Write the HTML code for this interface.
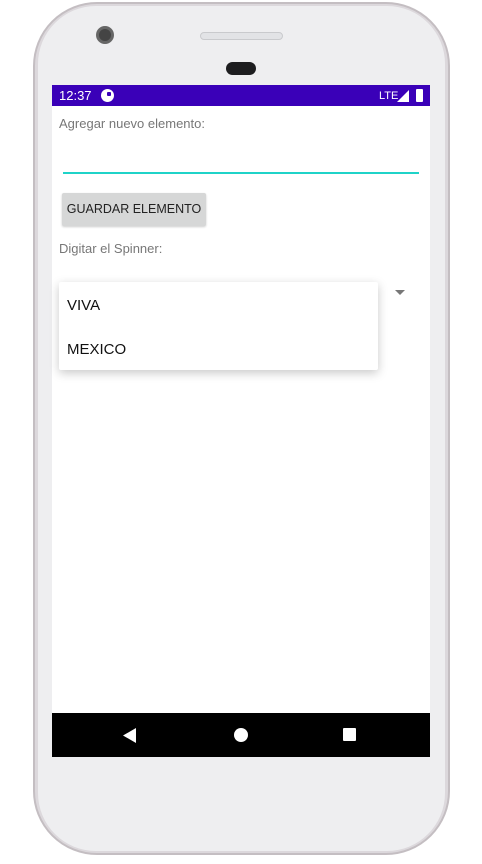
<!DOCTYPE html>
<html><head><meta charset="utf-8"><style>
*{margin:0;padding:0;box-sizing:border-box}
body{width:482px;height:864px;background:#fff;position:relative;overflow:hidden;font-family:"Liberation Sans",Roboto,sans-serif}
.phone{position:absolute;left:33px;top:2px;width:417px;height:853px;border-radius:64px;background:#dcd8dc;border:2px solid #c4bec2}
.inner{position:absolute;left:38px;top:6px;width:407px;height:845px;border-radius:58px;background:#eeeef0}
.screen{position:absolute;left:52px;top:85px;width:378px;height:672px;background:#fff}
.sb{position:absolute;left:0;top:0;width:378px;height:21px;background:#3a00b8;color:#fff;font-size:13px}
.nav{position:absolute;left:0;top:628px;width:378px;height:44px;background:#000}
</style></head><body>
<div class="phone"></div>
<div class="inner"></div>
<div style="position:absolute;left:96px;top:26px;width:18px;height:18px;border-radius:50%;background:#444;border:3px solid #666"></div>
<div style="position:absolute;left:200px;top:32px;width:83px;height:8px;border-radius:4px;background:#e2e3e6;border:1px solid #c9cacd"></div>
<div style="position:absolute;left:226px;top:62px;width:30px;height:13px;border-radius:7px;background:#1d1d1f"></div>
<div class="screen">
 <div class="sb">
  <span style="position:absolute;left:7px;top:3px">12:37</span>
  <div style="position:absolute;left:49px;top:4px;width:13px;height:13px;border-radius:50%;background:#fff"></div>
  <div style="position:absolute;left:55px;top:7px;width:4px;height:4px;border-radius:1px;background:#3a00b8"></div>
  <span style="position:absolute;left:327px;top:5px;font-size:11px">LTE</span>
  <svg style="position:absolute;left:345px;top:5px" width="12" height="12"><path d="M12 0V12H0Z" fill="#fff"/></svg>
  <div style="position:absolute;left:364px;top:4px;width:7px;height:13px;background:#fff;border-radius:1px"></div>
 </div>
 <div style="position:absolute;left:7px;top:31px;font-size:13px;color:#777">Agregar nuevo elemento:</div>
 <div style="position:absolute;left:11px;top:87px;width:356px;height:2px;background:#1fd3c8"></div>
 <div style="position:absolute;left:10px;top:108px;width:144px;height:33px;background:#d6d7d7;border-radius:2px;box-shadow:0 1px 2px rgba(0,0,0,.2);font-size:12.5px;color:#222;text-align:center;line-height:33px">GUARDAR ELEMENTO</div>
 <div style="position:absolute;left:7px;top:156px;font-size:13px;color:#777">Digitar el Spinner:</div>
 <svg style="position:absolute;left:343px;top:205px" width="10" height="6"><path d="M0 0H10L5 5Z" fill="#777"/></svg>
 <div style="position:absolute;left:7px;top:197px;width:319px;height:88px;background:#fff;border-radius:2px;box-shadow:0 3px 10px rgba(0,0,0,.22)">
  <div style="position:absolute;left:8px;top:15px;font-size:15px;color:#111">VIVA</div>
  <div style="position:absolute;left:8px;top:59px;font-size:15px;color:#111">MEXICO</div>
 </div>
 <div class="nav">
  <svg style="position:absolute;left:71px;top:15px" width="14" height="15"><path d="M13 0V15L0 7.5Z" fill="#fff"/></svg>
  <div style="position:absolute;left:182px;top:15px;width:14px;height:14px;border-radius:50%;background:#fff"></div>
  <div style="position:absolute;left:291px;top:15px;width:13px;height:13px;background:#fff;border-radius:1px"></div>
 </div>
</div>
</body></html>
